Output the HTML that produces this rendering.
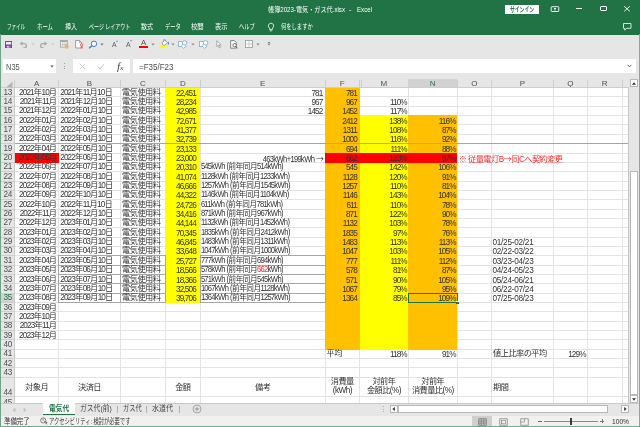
<!DOCTYPE html>
<html lang="ja">
<head>
<meta charset="utf-8">
<title>帳簿2023-電気・ガス代.xlsx - Excel</title>
<style>
html,body{margin:0;padding:0;}
body{width:640px;height:427px;overflow:hidden;position:relative;background:#fff;
 font-family:"Liberation Sans","Noto Sans CJK JP",sans-serif;}
#app{will-change:transform;position:absolute;left:0;top:0;width:640px;height:427px;overflow:hidden;background:#e6e6e6;}
#app div,#app svg{position:absolute;}
#app div{transform-origin:0 50%;}
.c{font-family:"Liberation Sans","Noto Sans CJK JP",sans-serif;font-size:8.2px;color:#333;white-space:nowrap;overflow:hidden;box-sizing:border-box;padding:0 1.5px;letter-spacing:-0.54px}
.n,.c.n{letter-spacing:-0.86px}
.tl{text-align:left}.tr{text-align:right}.tc{text-align:center}
.red,.c.red{color:#ff2a2a}
.h44{display:flex;align-items:center;line-height:8.6px}
.h44.tc{justify-content:center}.h44.tl{justify-content:flex-start}
.h44 span{display:block}
.hd{font-size:8px;color:#505050;text-align:center}
.rn{font-size:8.2px;color:#505050;text-align:center;letter-spacing:-0.3px}
.ui{font-family:"Liberation Sans","Noto Sans CJK JP",sans-serif;white-space:nowrap;line-height:1.3}
.w7{color:#fff;font-size:7px}
.g7{color:#444;font-size:7px}
.g8{color:#444;font-size:8px}
.ar{font-family:"Noto Sans CJK JP",sans-serif}
</style>
</head>
<body>
<div id="app">
<div style="left:0.00px;top:0.00px;width:640.00px;height:34.50px;background:#217346"></div>
<div class="ui w7" style="left:267.50px;top:5.05px;transform:scaleX(0.876);">帳簿2023-電気・ガス代.xlsx</div>
<div class="ui w7" style="left:349.00px;top:5.05px;transform:scaleX(1.067);">-</div>
<div class="ui w7" style="left:356.60px;top:5.05px;transform:scaleX(0.882);">Excel</div>
<div style="left:505.20px;top:5.20px;width:33.50px;height:8.80px;background:#fff"></div>
<div class="ui" style="left:510.00px;top:5.05px;transform:scaleX(0.686);color:#217346;font-size:7px;font-weight:bold">サインイン</div>
<svg style="left:549.50px;top:5.00px" width="10" height="8" viewBox="0 0 10 8"><rect x="1.2" y="1.7" width="7.6" height="4.8" rx="0.6" fill="none" stroke="#fff" stroke-width="0.9"/><path d="M5 5.6V3.1M3.9 4.1L5 3L6.1 4.1" fill="none" stroke="#fff" stroke-width="0.8"/></svg>
<div style="left:575.50px;top:8.00px;width:6.50px;height:1.00px;background:#fff"></div>
<div style="left:600.00px;top:6.30px;width:6.50px;height:5.00px;border:1px solid #fff;box-sizing:border-box;border-radius:1px"></div>
<svg style="left:623.00px;top:5.00px" width="8" height="8" viewBox="0 0 8 8"><path d="M1.2 1.3L6.8 6.3M6.8 1.3L1.2 6.3" stroke="#fff" stroke-width="0.9" fill="none"/></svg>
<svg style="left:622.00px;top:22.00px" width="11" height="10" viewBox="0 0 11 10"><path d="M1.5 1.5H9V6.3H4.6L2.8 8.2V6.3H1.5Z" fill="none" stroke="#fff" stroke-width="0.8"/></svg>
<div class="ui w7" style="left:6.60px;top:21.75px;transform:scaleX(0.646);">ファイル</div>
<div class="ui w7" style="left:37.20px;top:21.75px;transform:scaleX(0.769);">ホーム</div>
<div class="ui w7" style="left:65.00px;top:21.75px;transform:scaleX(0.857);">挿入</div>
<div class="ui w7" style="left:88.60px;top:21.75px;transform:scaleX(0.713);">ページ レイアウト</div>
<div class="ui w7" style="left:141.40px;top:21.75px;transform:scaleX(0.871);">数式</div>
<div class="ui w7" style="left:165.00px;top:21.75px;transform:scaleX(0.752);">データ</div>
<div class="ui w7" style="left:191.30px;top:21.75px;transform:scaleX(0.907);">校閲</div>
<div class="ui w7" style="left:215.30px;top:21.75px;transform:scaleX(0.893);">表示</div>
<div class="ui w7" style="left:239.40px;top:21.75px;transform:scaleX(0.752);">ヘルプ</div>
<div class="ui w7" style="left:281.30px;top:21.75px;transform:scaleX(0.755);">何をしますか</div>
<svg style="left:266.00px;top:21.50px" width="10" height="10" viewBox="0 0 10 10"><path d="M5 1.2A2.7 2.7 0 0 0 3.5 6.1V7.4H6.5V6.1A2.7 2.7 0 0 0 5 1.2Z" fill="none" stroke="#fff" stroke-width="0.8"/><path d="M3.8 8.8H6.2" stroke="#fff" stroke-width="0.8"/></svg>
<div style="left:1.00px;top:34.50px;width:638.00px;height:20.30px;background:#e6e6e6"></div>
<svg style="left:4.90px;top:40.50px" width="7.2" height="7.2" viewBox="0 0 7.2 7.2"><rect x="0" y="0" width="7.2" height="7.2" rx="0.4" fill="#7d40a2"/><rect x="1" y="1" width="5.2" height="2.5" fill="#f3ecf7"/><rect x="1.9" y="4.9" width="3.4" height="1.7" fill="#e3d3ec"/><rect x="3.9" y="5.2" width="1" height="1.4" fill="#7d40a2"/></svg>
<svg style="left:19.30px;top:40.60px" width="9" height="7.5" viewBox="0 0 9 7.5"><path d="M3.6 0.4L0.5 2.6L3.6 4.8Z" fill="#aaa"/><path d="M2.5 2.6H5.3A2.1 2.1 0 0 1 5.3 6.8H4.2" fill="none" stroke="#aaa" stroke-width="1.3"/></svg>
<svg style="left:30.50px;top:43.30px" width="4" height="3" viewBox="0 0 4 3"><path d="M0.3 0.4H3.7L2 2.5Z" fill="#c8c8c8"/></svg>
<svg style="left:39.30px;top:40.60px" width="9" height="7.5" viewBox="0 0 9 7.5"><path d="M5.4 0.4L8.5 2.6L5.4 4.8Z" fill="#aaa"/><path d="M6.5 2.6H3.7A2.1 2.1 0 0 0 3.7 6.8H4.8" fill="none" stroke="#aaa" stroke-width="1.3"/></svg>
<svg style="left:51.00px;top:43.30px" width="4" height="3" viewBox="0 0 4 3"><path d="M0.3 0.4H3.7L2 2.5Z" fill="#c8c8c8"/></svg>
<svg style="left:59.70px;top:40.00px" width="9" height="9" viewBox="0 0 9 9"><rect x="0.5" y="0.5" width="6.8" height="6.6" fill="#fff" stroke="#a0a0a0" stroke-width="0.8"/><rect x="0.5" y="0.5" width="6.8" height="1.6" fill="#a8a8a8"/><path d="M0.5 4.6H7.3M2.8 0.5V7.1M5 0.5V7.1" stroke="#b0b0b0" stroke-width="0.7"/><rect x="5" y="5" width="3.4" height="3.4" rx="0.5" fill="#f2b04c"/><path d="M5.8 5V4.3A0.9 0.9 0 0 1 7.6 4.3V5" fill="none" stroke="#f2b04c" stroke-width="0.7"/></svg>
<svg style="left:75.00px;top:40.00px" width="9" height="9" viewBox="0 0 9 9"><path d="M0.6 0.5H4.6L6.6 2.5V8H0.6Z" fill="#fff" stroke="#8c8c8c" stroke-width="0.8"/><path d="M4.4 0.5V2.7H6.6" fill="none" stroke="#8c8c8c" stroke-width="0.7"/><circle cx="6.6" cy="4.9" r="1.2" fill="#f7d2cc" stroke="#e05a44" stroke-width="0.8"/><path d="M5.6 8.4L6.6 6L7.7 8.4" fill="none" stroke="#e05a44" stroke-width="0.9"/></svg>
<svg style="left:88.00px;top:39.50px" width="10" height="9.5" viewBox="0 0 10 9.5"><circle cx="6" cy="3.8" r="2.7" fill="#fff" stroke="#3a78c8" stroke-width="0.95"/><path d="M4 5.8L1 8.3" stroke="#3a78c8" stroke-width="1.2"/></svg>
<svg style="left:100.40px;top:43.30px" width="4" height="3" viewBox="0 0 4 3"><path d="M0.3 0.4H3.7L2 2.5Z" fill="#7a7a7a"/></svg>
<div class="ui" style="left:111.80px;top:39.95px;transform:scaleX(0.963);color:#5a5a5a;font-size:7px">A</div>
<svg style="left:115.60px;top:39.90px" width="2" height="2" viewBox="0 0 2 2"><path d="M0.1 1.7L1 0.2L1.9 1.7Z" fill="#3a78c8"/></svg>
<div class="ui" style="left:126.20px;top:40.15px;transform:scaleX(0.985);color:#5a5a5a;font-size:7px">A</div>
<svg style="left:129.80px;top:40.10px" width="2" height="2" viewBox="0 0 2 2"><path d="M0.1 0.3L1 1.8L1.9 0.3Z" fill="#3a78c8"/></svg>
<div class="ui" style="left:141.10px;top:38.19px;transform:scaleX(1.053);color:#505050;font-size:7.4px">A</div>
<div style="left:139.10px;top:46.40px;width:8.80px;height:2.10px;background:#ff0000"></div>
<svg style="left:150.70px;top:43.30px" width="4" height="3" viewBox="0 0 4 3"><path d="M0.3 0.4H3.7L2 2.5Z" fill="#8a8a8a"/></svg>
<svg style="left:160.50px;top:39.30px" width="8.5" height="7.5" viewBox="0 0 8.5 7.5"><path d="M1.2 3.6L3.8 1.2L6.6 3.8L3.8 6.2Q2.4 6.6 1.4 5.4Z" fill="#fff" stroke="#8a8a8a" stroke-width="0.8"/><path d="M2.6 2.4V1.2A0.9 0.9 0 0 1 4.4 1.2V1.8" fill="none" stroke="#8a8a8a" stroke-width="0.6"/><path d="M7.3 2.6Q8.5 4.8 7.3 5.8Q6.3 4.8 7.3 2.6Z" fill="#3a6fc0"/></svg>
<div style="left:159.60px;top:46.40px;width:8.60px;height:2.10px;background:#ffff00"></div>
<svg style="left:171.30px;top:43.30px" width="4" height="3" viewBox="0 0 4 3"><path d="M0.3 0.4H3.7L2 2.5Z" fill="#8f8f8f"/></svg>
<svg style="left:178.00px;top:39.60px" width="9.5" height="9" viewBox="0 0 9.5 9"><rect x="0.5" y="1.6" width="4.8" height="4.8" fill="#fff" stroke="#7ba7d8" stroke-width="0.8"/><circle cx="6.6" cy="2.9" r="2.3" fill="#fff" stroke="#7ba7d8" stroke-width="0.8"/><path d="M5.6 4.1L7.8 6.3L5.6 8.5L3.4 6.3Z" fill="#fff" stroke="#7ba7d8" stroke-width="0.8"/></svg>
<svg style="left:190.50px;top:43.30px" width="4" height="3" viewBox="0 0 4 3"><path d="M0.3 0.4H3.7L2 2.5Z" fill="#8f8f8f"/></svg>
<svg style="left:199.00px;top:39.60px" width="9.5" height="9" viewBox="0 0 9.5 9"><rect x="0.5" y="1.6" width="4.8" height="4.8" fill="#fff" stroke="#7ba7d8" stroke-width="0.8"/><circle cx="6.6" cy="2.9" r="2.3" fill="#fff" stroke="#7ba7d8" stroke-width="0.8"/><path d="M5.6 4.1L7.8 6.3L5.6 8.5L3.4 6.3Z" fill="#fff" stroke="#7ba7d8" stroke-width="0.8"/></svg>
<svg style="left:216.20px;top:40.00px" width="6" height="9" viewBox="0 0 6 9"><path d="M0.8 0.7V6.6L2.3 5.2L3.4 7.9L4.4 7.5L3.3 4.9H5.2Z" fill="#fff" stroke="#8a8a8a" stroke-width="0.7"/></svg>
<svg style="left:229.80px;top:39.80px" width="8.5" height="9" viewBox="0 0 8.5 9"><path d="M0.7 0.6H4.4L6.2 2.4V8.2H0.7Z" fill="#fff" stroke="#6a6a6a" stroke-width="0.8"/><circle cx="4.6" cy="5.2" r="1.7" fill="#fff" stroke="#555" stroke-width="0.8"/><path d="M5.8 6.5L7.6 8.4" stroke="#555" stroke-width="0.9"/></svg>
<svg style="left:244.80px;top:40.00px" width="8" height="8" viewBox="0 0 8 8"><rect x="0.5" y="0.5" width="7" height="7" fill="#fff" stroke="#9a9a9a" stroke-width="0.8"/><path d="M4 0.5V7.5M0.5 4H7.5" stroke="#b8b8b8" stroke-width="0.7"/></svg>
<svg style="left:256.00px;top:43.30px" width="4" height="3" viewBox="0 0 4 3"><path d="M0.3 0.4H3.7L2 2.5Z" fill="#8a8a8a"/></svg>
<div style="left:267.70px;top:41.90px;width:2.20px;height:0.60px;background:#888"></div>
<svg style="left:266.80px;top:43.00px" width="4" height="3" viewBox="0 0 4 3"><path d="M0.3 0.4H3.7L2 2.5Z" fill="#888"/></svg>
<div style="left:1.00px;top:54.80px;width:638.00px;height:24.50px;background:#e6e6e6"></div>
<div style="left:3.30px;top:58.80px;width:53.00px;height:14.50px;background:#fff"></div>
<div class="ui g8" style="left:6.30px;top:61.84px;transform:scaleX(0.891);font-size:8.4px;color:#555">N35</div>
<svg style="left:49.50px;top:65.30px" width="4" height="3" viewBox="0 0 4 3"><path d="M0.3 0.4H3.7L2 2.5Z" fill="#555"/></svg>
<div style="left:64.20px;top:63.20px;width:1.00px;height:1.00px;background:#a0a0a0"></div>
<div style="left:64.20px;top:65.70px;width:1.00px;height:1.00px;background:#a0a0a0"></div>
<div style="left:64.20px;top:68.20px;width:1.00px;height:1.00px;background:#a0a0a0"></div>
<div style="left:72.50px;top:58.80px;width:57.50px;height:14.50px;background:#fff"></div>
<svg style="left:78.50px;top:62.50px" width="7" height="7" viewBox="0 0 7 7"><path d="M0.8 0.8L6.2 6.2M6.2 0.8L0.8 6.2" stroke="#b9b9b9" stroke-width="0.8" fill="none"/></svg>
<svg style="left:97.00px;top:62.60px" width="8" height="7" viewBox="0 0 8 7"><path d="M0.8 3.8L2.9 6L7.2 0.9" stroke="#b9b9b9" stroke-width="0.8" fill="none"/></svg>
<div class="ui" style="left:117.30px;top:59.65px;transform:scaleX(1.103);font-family:'Liberation Serif',serif;font-style:italic;font-size:10px;color:#444">f<span style="font-size:7px">x</span></div>
<div style="left:132.50px;top:58.80px;width:503.70px;height:14.30px;background:#fff"></div>
<div class="ui g8" style="left:139.00px;top:61.64px;transform:scaleX(0.953);font-size:8.4px;color:#505050">=F35/F23</div>
<svg style="left:627.00px;top:64.20px" width="5" height="4" viewBox="0 0 5 4"><path d="M0.6 0.8L2.5 2.8L4.4 0.8" stroke="#444" stroke-width="0.8" fill="none"/></svg>
<div style="left:14.50px;top:87.60px;width:614.10px;height:315.60px;background:#fff"></div>
<div style="left:14.50px;top:96.44px;width:614.10px;height:1.00px;background:#e3e3e3"></div>
<div style="left:14.50px;top:105.79px;width:614.10px;height:1.00px;background:#e3e3e3"></div>
<div style="left:14.50px;top:115.13px;width:614.10px;height:1.00px;background:#e3e3e3"></div>
<div style="left:14.50px;top:124.48px;width:614.10px;height:1.00px;background:#e3e3e3"></div>
<div style="left:14.50px;top:133.82px;width:614.10px;height:1.00px;background:#e3e3e3"></div>
<div style="left:14.50px;top:143.17px;width:614.10px;height:1.00px;background:#e3e3e3"></div>
<div style="left:14.50px;top:152.51px;width:614.10px;height:1.00px;background:#e3e3e3"></div>
<div style="left:14.50px;top:161.86px;width:614.10px;height:1.00px;background:#e3e3e3"></div>
<div style="left:14.50px;top:171.20px;width:614.10px;height:1.00px;background:#e3e3e3"></div>
<div style="left:14.50px;top:180.55px;width:614.10px;height:1.00px;background:#e3e3e3"></div>
<div style="left:14.50px;top:189.89px;width:614.10px;height:1.00px;background:#e3e3e3"></div>
<div style="left:14.50px;top:199.24px;width:614.10px;height:1.00px;background:#e3e3e3"></div>
<div style="left:14.50px;top:208.59px;width:614.10px;height:1.00px;background:#e3e3e3"></div>
<div style="left:14.50px;top:217.93px;width:614.10px;height:1.00px;background:#e3e3e3"></div>
<div style="left:14.50px;top:227.28px;width:614.10px;height:1.00px;background:#e3e3e3"></div>
<div style="left:14.50px;top:236.62px;width:614.10px;height:1.00px;background:#e3e3e3"></div>
<div style="left:14.50px;top:245.97px;width:614.10px;height:1.00px;background:#e3e3e3"></div>
<div style="left:14.50px;top:255.31px;width:614.10px;height:1.00px;background:#e3e3e3"></div>
<div style="left:14.50px;top:264.65px;width:614.10px;height:1.00px;background:#e3e3e3"></div>
<div style="left:14.50px;top:274.00px;width:614.10px;height:1.00px;background:#e3e3e3"></div>
<div style="left:14.50px;top:283.35px;width:614.10px;height:1.00px;background:#e3e3e3"></div>
<div style="left:14.50px;top:292.69px;width:614.10px;height:1.00px;background:#e3e3e3"></div>
<div style="left:14.50px;top:302.03px;width:614.10px;height:1.00px;background:#e3e3e3"></div>
<div style="left:14.50px;top:311.38px;width:614.10px;height:1.00px;background:#e3e3e3"></div>
<div style="left:14.50px;top:320.73px;width:614.10px;height:1.00px;background:#e3e3e3"></div>
<div style="left:14.50px;top:330.07px;width:614.10px;height:1.00px;background:#e3e3e3"></div>
<div style="left:14.50px;top:339.42px;width:614.10px;height:1.00px;background:#e3e3e3"></div>
<div style="left:14.50px;top:348.76px;width:614.10px;height:1.00px;background:#e3e3e3"></div>
<div style="left:14.50px;top:358.11px;width:614.10px;height:1.00px;background:#e3e3e3"></div>
<div style="left:14.50px;top:367.45px;width:614.10px;height:1.00px;background:#e3e3e3"></div>
<div style="left:14.50px;top:376.79px;width:614.10px;height:1.00px;background:#e3e3e3"></div>
<div style="left:14.50px;top:396.10px;width:614.10px;height:1.00px;background:#e3e3e3"></div>
<div style="left:58.20px;top:87.60px;width:1.00px;height:315.60px;background:#e3e3e3"></div>
<div style="left:119.80px;top:87.60px;width:1.00px;height:315.60px;background:#e3e3e3"></div>
<div style="left:164.80px;top:87.60px;width:1.00px;height:315.60px;background:#e3e3e3"></div>
<div style="left:199.80px;top:87.60px;width:1.00px;height:315.60px;background:#e3e3e3"></div>
<div style="left:324.50px;top:87.60px;width:1.00px;height:315.60px;background:#e3e3e3"></div>
<div style="left:359.10px;top:87.60px;width:1.00px;height:315.60px;background:#e3e3e3"></div>
<div style="left:407.80px;top:87.60px;width:1.00px;height:315.60px;background:#e3e3e3"></div>
<div style="left:456.70px;top:87.60px;width:1.00px;height:315.60px;background:#e3e3e3"></div>
<div style="left:491.10px;top:87.60px;width:1.00px;height:315.60px;background:#e3e3e3"></div>
<div style="left:552.90px;top:87.60px;width:1.00px;height:315.60px;background:#e3e3e3"></div>
<div style="left:586.70px;top:87.60px;width:1.00px;height:315.60px;background:#e3e3e3"></div>
<div style="left:621.80px;top:87.60px;width:1.00px;height:315.60px;background:#e3e3e3"></div>
<div style="left:458.20px;top:153.51px;width:103.20px;height:8.35px;background:#fff"></div>
<div style="left:165.70px;top:87.10px;width:34.70px;height:215.83px;background:#ffff00"></div>
<div style="left:325.40px;top:87.10px;width:34.30px;height:262.46px;background:#ffc000"></div>
<div style="left:359.60px;top:115.13px;width:48.70px;height:234.43px;background:#ffff00"></div>
<div style="left:408.20px;top:115.13px;width:49.30px;height:234.43px;background:#ffc000"></div>
<div style="left:15.00px;top:152.51px;width:44.20px;height:10.35px;background:#ff0000"></div>
<div style="left:325.40px;top:152.51px;width:132.10px;height:10.35px;background:#ff0000"></div>
<div style="left:14.50px;top:143.17px;width:624.50px;height:1.00px;background:#ff8080"></div>
<div style="left:58.30px;top:255.41px;width:267.10px;height:0.80px;background:#a6a6a6"></div>
<div style="left:58.30px;top:264.75px;width:267.10px;height:0.80px;background:#a6a6a6"></div>
<div style="left:58.30px;top:274.10px;width:267.10px;height:0.80px;background:#a6a6a6"></div>
<div style="left:58.30px;top:283.45px;width:267.10px;height:0.80px;background:#a6a6a6"></div>
<div style="left:58.30px;top:292.79px;width:267.10px;height:0.80px;background:#a6a6a6"></div>
<div style="left:58.30px;top:302.13px;width:267.10px;height:0.80px;background:#a6a6a6"></div>
<div style="left:58.30px;top:255.41px;width:0.80px;height:47.52px;background:#a6a6a6"></div>
<div style="left:119.90px;top:255.41px;width:0.80px;height:47.52px;background:#a6a6a6"></div>
<div style="left:164.90px;top:255.41px;width:0.80px;height:47.52px;background:#a6a6a6"></div>
<div style="left:199.90px;top:255.41px;width:0.80px;height:47.52px;background:#a6a6a6"></div>
<div style="left:324.60px;top:255.41px;width:0.80px;height:47.52px;background:#a6a6a6"></div>
<div style="left:165.80px;top:255.31px;width:34.20px;height:47.72px;background:#ffff00"></div>
<div class="c tr" style="left:14.50px;top:87.60px;width:44.20px;height:9.34px;line-height:10.54px;padding-right:2.2px"><span class="n">2021</span>年<span class="n">10</span>月</div>
<div class="c tl" style="left:58.70px;top:87.60px;width:61.60px;height:9.34px;line-height:10.54px;"><span class="n">2021</span>年<span class="n">11</span>月<span class="n">10</span>日</div>
<div class="c tl" style="left:120.30px;top:87.60px;width:45.00px;height:9.34px;line-height:10.54px;padding-left:1.8px">電気使用料</div>
<div class="c tr  n" style="left:165.30px;top:87.60px;width:35.00px;height:9.34px;line-height:12.94px;padding-right:4.4px">22,451</div>
<div class="c tr  n" style="left:200.30px;top:87.60px;width:124.70px;height:9.34px;line-height:12.94px;overflow:visible;padding-right:2.5px;padding-left:1px">781</div>
<div class="c tr  n" style="left:325.00px;top:87.60px;width:34.60px;height:9.34px;line-height:12.94px;padding-right:2.6px">781</div>
<div class="c tr" style="left:14.50px;top:96.94px;width:44.20px;height:9.34px;line-height:10.54px;padding-right:2.2px"><span class="n">2021</span>年<span class="n">11</span>月</div>
<div class="c tl" style="left:58.70px;top:96.94px;width:61.60px;height:9.34px;line-height:10.54px;"><span class="n">2021</span>年<span class="n">12</span>月<span class="n">10</span>日</div>
<div class="c tl" style="left:120.30px;top:96.94px;width:45.00px;height:9.34px;line-height:10.54px;padding-left:1.8px">電気使用料</div>
<div class="c tr  n" style="left:165.30px;top:96.94px;width:35.00px;height:9.34px;line-height:12.94px;padding-right:4.4px">28,234</div>
<div class="c tr  n" style="left:200.30px;top:96.94px;width:124.70px;height:9.34px;line-height:12.94px;overflow:visible;padding-right:2.5px;padding-left:1px">967</div>
<div class="c tr  n" style="left:325.00px;top:96.94px;width:34.60px;height:9.34px;line-height:12.94px;padding-right:2.6px">967</div>
<div class="c tr  n" style="left:359.60px;top:96.94px;width:48.70px;height:9.34px;line-height:12.94px;">110%</div>
<div class="c tr" style="left:14.50px;top:106.29px;width:44.20px;height:9.34px;line-height:10.54px;padding-right:2.2px"><span class="n">2021</span>年<span class="n">12</span>月</div>
<div class="c tl" style="left:58.70px;top:106.29px;width:61.60px;height:9.34px;line-height:10.54px;"><span class="n">2022</span>年<span class="n">01</span>月<span class="n">10</span>日</div>
<div class="c tl" style="left:120.30px;top:106.29px;width:45.00px;height:9.34px;line-height:10.54px;padding-left:1.8px">電気使用料</div>
<div class="c tr  n" style="left:165.30px;top:106.29px;width:35.00px;height:9.34px;line-height:12.94px;padding-right:4.4px">42,985</div>
<div class="c tr  n" style="left:200.30px;top:106.29px;width:124.70px;height:9.34px;line-height:12.94px;overflow:visible;padding-right:2.5px;padding-left:1px">1452</div>
<div class="c tr  n" style="left:325.00px;top:106.29px;width:34.60px;height:9.34px;line-height:12.94px;padding-right:2.6px">1452</div>
<div class="c tr  n" style="left:359.60px;top:106.29px;width:48.70px;height:9.34px;line-height:12.94px;">117%</div>
<div class="c tr" style="left:14.50px;top:115.63px;width:44.20px;height:9.34px;line-height:10.54px;padding-right:2.2px"><span class="n">2022</span>年<span class="n">01</span>月</div>
<div class="c tl" style="left:58.70px;top:115.63px;width:61.60px;height:9.34px;line-height:10.54px;"><span class="n">2022</span>年<span class="n">02</span>月<span class="n">10</span>日</div>
<div class="c tl" style="left:120.30px;top:115.63px;width:45.00px;height:9.34px;line-height:10.54px;padding-left:1.8px">電気使用料</div>
<div class="c tr  n" style="left:165.30px;top:115.63px;width:35.00px;height:9.34px;line-height:12.94px;padding-right:4.4px">72,671</div>
<div class="c tr  n" style="left:325.00px;top:115.63px;width:34.60px;height:9.34px;line-height:12.94px;padding-right:2.6px">2412</div>
<div class="c tr  n" style="left:359.60px;top:115.63px;width:48.70px;height:9.34px;line-height:12.94px;">138%</div>
<div class="c tr  n" style="left:408.30px;top:115.63px;width:48.90px;height:9.34px;line-height:12.94px;">116%</div>
<div class="c tr" style="left:14.50px;top:124.98px;width:44.20px;height:9.34px;line-height:10.54px;padding-right:2.2px"><span class="n">2022</span>年<span class="n">02</span>月</div>
<div class="c tl" style="left:58.70px;top:124.98px;width:61.60px;height:9.34px;line-height:10.54px;"><span class="n">2022</span>年<span class="n">03</span>月<span class="n">10</span>日</div>
<div class="c tl" style="left:120.30px;top:124.98px;width:45.00px;height:9.34px;line-height:10.54px;padding-left:1.8px">電気使用料</div>
<div class="c tr  n" style="left:165.30px;top:124.98px;width:35.00px;height:9.34px;line-height:12.94px;padding-right:4.4px">41,377</div>
<div class="c tr  n" style="left:325.00px;top:124.98px;width:34.60px;height:9.34px;line-height:12.94px;padding-right:2.6px">1311</div>
<div class="c tr  n" style="left:359.60px;top:124.98px;width:48.70px;height:9.34px;line-height:12.94px;">108%</div>
<div class="c tr  n" style="left:408.30px;top:124.98px;width:48.90px;height:9.34px;line-height:12.94px;">87%</div>
<div class="c tr" style="left:14.50px;top:134.32px;width:44.20px;height:9.35px;line-height:10.55px;padding-right:2.2px"><span class="n">2022</span>年<span class="n">03</span>月</div>
<div class="c tl" style="left:58.70px;top:134.32px;width:61.60px;height:9.35px;line-height:10.55px;"><span class="n">2022</span>年<span class="n">04</span>月<span class="n">10</span>日</div>
<div class="c tl" style="left:120.30px;top:134.32px;width:45.00px;height:9.35px;line-height:10.55px;padding-left:1.8px">電気使用料</div>
<div class="c tr  n" style="left:165.30px;top:134.32px;width:35.00px;height:9.35px;line-height:12.95px;padding-right:4.4px">32,739</div>
<div class="c tr  n" style="left:325.00px;top:134.32px;width:34.60px;height:9.35px;line-height:12.95px;padding-right:2.6px">1000</div>
<div class="c tr  n" style="left:359.60px;top:134.32px;width:48.70px;height:9.35px;line-height:12.95px;">116%</div>
<div class="c tr  n" style="left:408.30px;top:134.32px;width:48.90px;height:9.35px;line-height:12.95px;">92%</div>
<div class="c tr" style="left:14.50px;top:143.67px;width:44.20px;height:9.34px;line-height:10.54px;padding-right:2.2px"><span class="n">2022</span>年<span class="n">04</span>月</div>
<div class="c tl" style="left:58.70px;top:143.67px;width:61.60px;height:9.34px;line-height:10.54px;"><span class="n">2022</span>年<span class="n">05</span>月<span class="n">10</span>日</div>
<div class="c tl" style="left:120.30px;top:143.67px;width:45.00px;height:9.34px;line-height:10.54px;padding-left:1.8px">電気使用料</div>
<div class="c tr  n" style="left:165.30px;top:143.67px;width:35.00px;height:9.34px;line-height:12.94px;padding-right:4.4px">23,133</div>
<div class="c tr  n" style="left:325.00px;top:143.67px;width:34.60px;height:9.34px;line-height:12.94px;padding-right:2.6px">694</div>
<div class="c tr  n" style="left:359.60px;top:143.67px;width:48.70px;height:9.34px;line-height:12.94px;">111%</div>
<div class="c tr  n" style="left:408.30px;top:143.67px;width:48.90px;height:9.34px;line-height:12.94px;">88%</div>
<div class="c tr" style="left:14.50px;top:153.01px;width:44.20px;height:9.35px;line-height:10.55px;padding-right:2.2px"><span class="n">2022</span>年<span class="n">05</span>月</div>
<div class="c tl" style="left:58.70px;top:153.01px;width:61.60px;height:9.35px;line-height:10.55px;"><span class="n">2022</span>年<span class="n">06</span>月<span class="n">10</span>日</div>
<div class="c tl" style="left:120.30px;top:153.01px;width:45.00px;height:9.35px;line-height:10.55px;padding-left:1.8px">電気使用料</div>
<div class="c tr  n" style="left:165.30px;top:153.01px;width:35.00px;height:9.35px;line-height:12.95px;padding-right:4.4px">23,000</div>
<div class="c tr" style="left:200.30px;top:153.01px;width:124.70px;height:9.35px;line-height:10.55px;overflow:visible;padding-right:2.5px;padding-left:1px;transform-origin:100% 50%;transform:scaleX(0.93);padding-right:1.5px"><span class="n">463</span>kWh<span class="n">+199</span>kWh <span class="ar">→</span></div>
<div class="c tr  n" style="left:325.00px;top:153.01px;width:34.60px;height:9.35px;line-height:12.95px;padding-right:2.6px">662</div>
<div class="c tr  n" style="left:359.60px;top:153.01px;width:48.70px;height:9.35px;line-height:12.95px;">123%</div>
<div class="c tr  n" style="left:408.30px;top:153.01px;width:48.90px;height:9.35px;line-height:12.95px;">97%</div>
<div class="c tl red" style="left:457.20px;top:153.01px;width:34.40px;height:9.35px;line-height:10.55px;overflow:visible;width:200px">※ 従量電灯B<span class="ar">→</span>同Cへ契約変更</div>
<div class="c tr" style="left:14.50px;top:162.36px;width:44.20px;height:9.34px;line-height:10.54px;padding-right:2.2px"><span class="n">2022</span>年<span class="n">06</span>月</div>
<div class="c tl" style="left:58.70px;top:162.36px;width:61.60px;height:9.34px;line-height:10.54px;"><span class="n">2022</span>年<span class="n">07</span>月<span class="n">10</span>日</div>
<div class="c tl" style="left:120.30px;top:162.36px;width:45.00px;height:9.34px;line-height:10.54px;padding-left:1.8px">電気使用料</div>
<div class="c tr  n" style="left:165.30px;top:162.36px;width:35.00px;height:9.34px;line-height:12.94px;padding-right:4.4px">20,310</div>
<div class="c tl" style="left:200.30px;top:162.36px;width:124.70px;height:9.34px;line-height:10.54px;overflow:visible;padding-right:2.5px;padding-left:1px;transform:scaleX(0.93)"><span class="n">545</span>kWh (前年同月<span class="n">514</span>kWh)</div>
<div class="c tr  n" style="left:325.00px;top:162.36px;width:34.60px;height:9.34px;line-height:12.94px;padding-right:2.6px">545</div>
<div class="c tr  n" style="left:359.60px;top:162.36px;width:48.70px;height:9.34px;line-height:12.94px;">142%</div>
<div class="c tr  n" style="left:408.30px;top:162.36px;width:48.90px;height:9.34px;line-height:12.94px;">106%</div>
<div class="c tr" style="left:14.50px;top:171.70px;width:44.20px;height:9.35px;line-height:10.55px;padding-right:2.2px"><span class="n">2022</span>年<span class="n">07</span>月</div>
<div class="c tl" style="left:58.70px;top:171.70px;width:61.60px;height:9.35px;line-height:10.55px;"><span class="n">2022</span>年<span class="n">08</span>月<span class="n">10</span>日</div>
<div class="c tl" style="left:120.30px;top:171.70px;width:45.00px;height:9.35px;line-height:10.55px;padding-left:1.8px">電気使用料</div>
<div class="c tr  n" style="left:165.30px;top:171.70px;width:35.00px;height:9.35px;line-height:12.95px;padding-right:4.4px">41,074</div>
<div class="c tl" style="left:200.30px;top:171.70px;width:124.70px;height:9.35px;line-height:10.55px;overflow:visible;padding-right:2.5px;padding-left:1px;transform:scaleX(0.93)"><span class="n">1128</span>kWh (前年同月<span class="n">1233</span>kWh)</div>
<div class="c tr  n" style="left:325.00px;top:171.70px;width:34.60px;height:9.35px;line-height:12.95px;padding-right:2.6px">1128</div>
<div class="c tr  n" style="left:359.60px;top:171.70px;width:48.70px;height:9.35px;line-height:12.95px;">120%</div>
<div class="c tr  n" style="left:408.30px;top:171.70px;width:48.90px;height:9.35px;line-height:12.95px;">91%</div>
<div class="c tr" style="left:14.50px;top:181.05px;width:44.20px;height:9.34px;line-height:10.54px;padding-right:2.2px"><span class="n">2022</span>年<span class="n">08</span>月</div>
<div class="c tl" style="left:58.70px;top:181.05px;width:61.60px;height:9.34px;line-height:10.54px;"><span class="n">2022</span>年<span class="n">09</span>月<span class="n">10</span>日</div>
<div class="c tl" style="left:120.30px;top:181.05px;width:45.00px;height:9.34px;line-height:10.54px;padding-left:1.8px">電気使用料</div>
<div class="c tr  n" style="left:165.30px;top:181.05px;width:35.00px;height:9.34px;line-height:12.94px;padding-right:4.4px">46,666</div>
<div class="c tl" style="left:200.30px;top:181.05px;width:124.70px;height:9.34px;line-height:10.54px;overflow:visible;padding-right:2.5px;padding-left:1px;transform:scaleX(0.93)"><span class="n">1257</span>kWh (前年同月<span class="n">1545</span>kWh)</div>
<div class="c tr  n" style="left:325.00px;top:181.05px;width:34.60px;height:9.34px;line-height:12.94px;padding-right:2.6px">1257</div>
<div class="c tr  n" style="left:359.60px;top:181.05px;width:48.70px;height:9.34px;line-height:12.94px;">110%</div>
<div class="c tr  n" style="left:408.30px;top:181.05px;width:48.90px;height:9.34px;line-height:12.94px;">81%</div>
<div class="c tr" style="left:14.50px;top:190.39px;width:44.20px;height:9.35px;line-height:10.55px;padding-right:2.2px"><span class="n">2022</span>年<span class="n">09</span>月</div>
<div class="c tl" style="left:58.70px;top:190.39px;width:61.60px;height:9.35px;line-height:10.55px;"><span class="n">2022</span>年<span class="n">10</span>月<span class="n">10</span>日</div>
<div class="c tl" style="left:120.30px;top:190.39px;width:45.00px;height:9.35px;line-height:10.55px;padding-left:1.8px">電気使用料</div>
<div class="c tr  n" style="left:165.30px;top:190.39px;width:35.00px;height:9.35px;line-height:12.95px;padding-right:4.4px">44,322</div>
<div class="c tl" style="left:200.30px;top:190.39px;width:124.70px;height:9.35px;line-height:10.55px;overflow:visible;padding-right:2.5px;padding-left:1px;transform:scaleX(0.93)"><span class="n">1146</span>kWh (前年同月<span class="n">1104</span>kWh)</div>
<div class="c tr  n" style="left:325.00px;top:190.39px;width:34.60px;height:9.35px;line-height:12.95px;padding-right:2.6px">1146</div>
<div class="c tr  n" style="left:359.60px;top:190.39px;width:48.70px;height:9.35px;line-height:12.95px;">143%</div>
<div class="c tr  n" style="left:408.30px;top:190.39px;width:48.90px;height:9.35px;line-height:12.95px;">104%</div>
<div class="c tr" style="left:14.50px;top:199.74px;width:44.20px;height:9.34px;line-height:10.54px;padding-right:2.2px"><span class="n">2022</span>年<span class="n">10</span>月</div>
<div class="c tl" style="left:58.70px;top:199.74px;width:61.60px;height:9.34px;line-height:10.54px;"><span class="n">2022</span>年<span class="n">11</span>月<span class="n">10</span>日</div>
<div class="c tl" style="left:120.30px;top:199.74px;width:45.00px;height:9.34px;line-height:10.54px;padding-left:1.8px">電気使用料</div>
<div class="c tr  n" style="left:165.30px;top:199.74px;width:35.00px;height:9.34px;line-height:12.94px;padding-right:4.4px">24,726</div>
<div class="c tl" style="left:200.30px;top:199.74px;width:124.70px;height:9.34px;line-height:10.54px;overflow:visible;padding-right:2.5px;padding-left:1px;transform:scaleX(0.93)"><span class="n">611</span>kWh (前年同月<span class="n">781</span>kWh)</div>
<div class="c tr  n" style="left:325.00px;top:199.74px;width:34.60px;height:9.34px;line-height:12.94px;padding-right:2.6px">611</div>
<div class="c tr  n" style="left:359.60px;top:199.74px;width:48.70px;height:9.34px;line-height:12.94px;">110%</div>
<div class="c tr  n" style="left:408.30px;top:199.74px;width:48.90px;height:9.34px;line-height:12.94px;">78%</div>
<div class="c tr" style="left:14.50px;top:209.09px;width:44.20px;height:9.34px;line-height:10.54px;padding-right:2.2px"><span class="n">2022</span>年<span class="n">11</span>月</div>
<div class="c tl" style="left:58.70px;top:209.09px;width:61.60px;height:9.34px;line-height:10.54px;"><span class="n">2022</span>年<span class="n">12</span>月<span class="n">10</span>日</div>
<div class="c tl" style="left:120.30px;top:209.09px;width:45.00px;height:9.34px;line-height:10.54px;padding-left:1.8px">電気使用料</div>
<div class="c tr  n" style="left:165.30px;top:209.09px;width:35.00px;height:9.34px;line-height:12.94px;padding-right:4.4px">34,416</div>
<div class="c tl" style="left:200.30px;top:209.09px;width:124.70px;height:9.34px;line-height:10.54px;overflow:visible;padding-right:2.5px;padding-left:1px;transform:scaleX(0.93)"><span class="n">871</span>kWh (前年同月<span class="n">967</span>kWh)</div>
<div class="c tr  n" style="left:325.00px;top:209.09px;width:34.60px;height:9.34px;line-height:12.94px;padding-right:2.6px">871</div>
<div class="c tr  n" style="left:359.60px;top:209.09px;width:48.70px;height:9.34px;line-height:12.94px;">122%</div>
<div class="c tr  n" style="left:408.30px;top:209.09px;width:48.90px;height:9.34px;line-height:12.94px;">90%</div>
<div class="c tr" style="left:14.50px;top:218.43px;width:44.20px;height:9.34px;line-height:10.54px;padding-right:2.2px"><span class="n">2022</span>年<span class="n">12</span>月</div>
<div class="c tl" style="left:58.70px;top:218.43px;width:61.60px;height:9.34px;line-height:10.54px;"><span class="n">2023</span>年<span class="n">01</span>月<span class="n">10</span>日</div>
<div class="c tl" style="left:120.30px;top:218.43px;width:45.00px;height:9.34px;line-height:10.54px;padding-left:1.8px">電気使用料</div>
<div class="c tr  n" style="left:165.30px;top:218.43px;width:35.00px;height:9.34px;line-height:12.94px;padding-right:4.4px">44,144</div>
<div class="c tl" style="left:200.30px;top:218.43px;width:124.70px;height:9.34px;line-height:10.54px;overflow:visible;padding-right:2.5px;padding-left:1px;transform:scaleX(0.93)"><span class="n">1132</span>kWh (前年同月<span class="n">1452</span>kWh)</div>
<div class="c tr  n" style="left:325.00px;top:218.43px;width:34.60px;height:9.34px;line-height:12.94px;padding-right:2.6px">1132</div>
<div class="c tr  n" style="left:359.60px;top:218.43px;width:48.70px;height:9.34px;line-height:12.94px;">103%</div>
<div class="c tr  n" style="left:408.30px;top:218.43px;width:48.90px;height:9.34px;line-height:12.94px;">78%</div>
<div class="c tr" style="left:14.50px;top:227.78px;width:44.20px;height:9.34px;line-height:10.54px;padding-right:2.2px"><span class="n">2023</span>年<span class="n">01</span>月</div>
<div class="c tl" style="left:58.70px;top:227.78px;width:61.60px;height:9.34px;line-height:10.54px;"><span class="n">2023</span>年<span class="n">02</span>月<span class="n">10</span>日</div>
<div class="c tl" style="left:120.30px;top:227.78px;width:45.00px;height:9.34px;line-height:10.54px;padding-left:1.8px">電気使用料</div>
<div class="c tr  n" style="left:165.30px;top:227.78px;width:35.00px;height:9.34px;line-height:12.94px;padding-right:4.4px">70,345</div>
<div class="c tl" style="left:200.30px;top:227.78px;width:124.70px;height:9.34px;line-height:10.54px;overflow:visible;padding-right:2.5px;padding-left:1px;transform:scaleX(0.93)"><span class="n">1835</span>kWh (前年同月<span class="n">2412</span>kWh)</div>
<div class="c tr  n" style="left:325.00px;top:227.78px;width:34.60px;height:9.34px;line-height:12.94px;padding-right:2.6px">1835</div>
<div class="c tr  n" style="left:359.60px;top:227.78px;width:48.70px;height:9.34px;line-height:12.94px;">97%</div>
<div class="c tr  n" style="left:408.30px;top:227.78px;width:48.90px;height:9.34px;line-height:12.94px;">76%</div>
<div class="c tr" style="left:14.50px;top:237.12px;width:44.20px;height:9.34px;line-height:10.54px;padding-right:2.2px"><span class="n">2023</span>年<span class="n">02</span>月</div>
<div class="c tl" style="left:58.70px;top:237.12px;width:61.60px;height:9.34px;line-height:10.54px;"><span class="n">2023</span>年<span class="n">03</span>月<span class="n">10</span>日</div>
<div class="c tl" style="left:120.30px;top:237.12px;width:45.00px;height:9.34px;line-height:10.54px;padding-left:1.8px">電気使用料</div>
<div class="c tr  n" style="left:165.30px;top:237.12px;width:35.00px;height:9.34px;line-height:12.94px;padding-right:4.4px">46,845</div>
<div class="c tl" style="left:200.30px;top:237.12px;width:124.70px;height:9.34px;line-height:10.54px;overflow:visible;padding-right:2.5px;padding-left:1px;transform:scaleX(0.93)"><span class="n">1483</span>kWh (前年同月<span class="n">1311</span>kWh)</div>
<div class="c tr  n" style="left:325.00px;top:237.12px;width:34.60px;height:9.34px;line-height:12.94px;padding-right:2.6px">1483</div>
<div class="c tr  n" style="left:359.60px;top:237.12px;width:48.70px;height:9.34px;line-height:12.94px;">113%</div>
<div class="c tr  n" style="left:408.30px;top:237.12px;width:48.90px;height:9.34px;line-height:12.94px;">113%</div>
<div class="c tl  n" style="left:491.60px;top:237.12px;width:61.80px;height:9.34px;line-height:12.94px;letter-spacing:-0.25px;padding-left:0.9px">01/25-02/21</div>
<div class="c tr" style="left:14.50px;top:246.47px;width:44.20px;height:9.34px;line-height:10.54px;padding-right:2.2px"><span class="n">2023</span>年<span class="n">03</span>月</div>
<div class="c tl" style="left:58.70px;top:246.47px;width:61.60px;height:9.34px;line-height:10.54px;"><span class="n">2023</span>年<span class="n">04</span>月<span class="n">10</span>日</div>
<div class="c tl" style="left:120.30px;top:246.47px;width:45.00px;height:9.34px;line-height:10.54px;padding-left:1.8px">電気使用料</div>
<div class="c tr  n" style="left:165.30px;top:246.47px;width:35.00px;height:9.34px;line-height:12.94px;padding-right:4.4px">33,648</div>
<div class="c tl" style="left:200.30px;top:246.47px;width:124.70px;height:9.34px;line-height:10.54px;overflow:visible;padding-right:2.5px;padding-left:1px;transform:scaleX(0.93)"><span class="n">1047</span>kWh (前年同月<span class="n">1000</span>kWh)</div>
<div class="c tr  n" style="left:325.00px;top:246.47px;width:34.60px;height:9.34px;line-height:12.94px;padding-right:2.6px">1047</div>
<div class="c tr  n" style="left:359.60px;top:246.47px;width:48.70px;height:9.34px;line-height:12.94px;">103%</div>
<div class="c tr  n" style="left:408.30px;top:246.47px;width:48.90px;height:9.34px;line-height:12.94px;">105%</div>
<div class="c tl  n" style="left:491.60px;top:246.47px;width:61.80px;height:9.34px;line-height:12.94px;letter-spacing:-0.25px;padding-left:0.9px">02/22-03/22</div>
<div class="c tr" style="left:14.50px;top:255.81px;width:44.20px;height:9.34px;line-height:10.54px;padding-right:2.2px"><span class="n">2023</span>年<span class="n">04</span>月</div>
<div class="c tl" style="left:58.70px;top:255.81px;width:61.60px;height:9.34px;line-height:10.54px;"><span class="n">2023</span>年<span class="n">05</span>月<span class="n">10</span>日</div>
<div class="c tl" style="left:120.30px;top:255.81px;width:45.00px;height:9.34px;line-height:10.54px;padding-left:1.8px">電気使用料</div>
<div class="c tr  n" style="left:165.30px;top:255.81px;width:35.00px;height:9.34px;line-height:12.94px;padding-right:4.4px">25,727</div>
<div class="c tl" style="left:200.30px;top:255.81px;width:124.70px;height:9.34px;line-height:10.54px;overflow:visible;padding-right:2.5px;padding-left:1px;transform:scaleX(0.93)"><span class="n">777</span>kWh (前年同月<span class="n">694</span>kWh)</div>
<div class="c tr  n" style="left:325.00px;top:255.81px;width:34.60px;height:9.34px;line-height:12.94px;padding-right:2.6px">777</div>
<div class="c tr  n" style="left:359.60px;top:255.81px;width:48.70px;height:9.34px;line-height:12.94px;">111%</div>
<div class="c tr  n" style="left:408.30px;top:255.81px;width:48.90px;height:9.34px;line-height:12.94px;">112%</div>
<div class="c tl  n" style="left:491.60px;top:255.81px;width:61.80px;height:9.34px;line-height:12.94px;letter-spacing:-0.25px;padding-left:0.9px">03/23-04/23</div>
<div class="c tr" style="left:14.50px;top:265.15px;width:44.20px;height:9.35px;line-height:10.55px;padding-right:2.2px"><span class="n">2023</span>年<span class="n">05</span>月</div>
<div class="c tl" style="left:58.70px;top:265.15px;width:61.60px;height:9.35px;line-height:10.55px;"><span class="n">2023</span>年<span class="n">06</span>月<span class="n">10</span>日</div>
<div class="c tl" style="left:120.30px;top:265.15px;width:45.00px;height:9.35px;line-height:10.55px;padding-left:1.8px">電気使用料</div>
<div class="c tr  n" style="left:165.30px;top:265.15px;width:35.00px;height:9.35px;line-height:12.95px;padding-right:4.4px">18,566</div>
<div class="c tl" style="left:200.30px;top:265.15px;width:124.70px;height:9.35px;line-height:10.55px;overflow:visible;padding-right:2.5px;padding-left:1px;transform:scaleX(0.93)"><span class="n">578</span>kWh (前年同月<span class="red"><span class="n">662</span></span>kWh)</div>
<div class="c tr  n" style="left:325.00px;top:265.15px;width:34.60px;height:9.35px;line-height:12.95px;padding-right:2.6px">578</div>
<div class="c tr  n" style="left:359.60px;top:265.15px;width:48.70px;height:9.35px;line-height:12.95px;">81%</div>
<div class="c tr  n" style="left:408.30px;top:265.15px;width:48.90px;height:9.35px;line-height:12.95px;">87%</div>
<div class="c tl  n" style="left:491.60px;top:265.15px;width:61.80px;height:9.35px;line-height:12.95px;letter-spacing:-0.25px;padding-left:0.9px">04/24-05/23</div>
<div class="c tr" style="left:14.50px;top:274.50px;width:44.20px;height:9.35px;line-height:10.55px;padding-right:2.2px"><span class="n">2023</span>年<span class="n">06</span>月</div>
<div class="c tl" style="left:58.70px;top:274.50px;width:61.60px;height:9.35px;line-height:10.55px;"><span class="n">2023</span>年<span class="n">07</span>月<span class="n">10</span>日</div>
<div class="c tl" style="left:120.30px;top:274.50px;width:45.00px;height:9.35px;line-height:10.55px;padding-left:1.8px">電気使用料</div>
<div class="c tr  n" style="left:165.30px;top:274.50px;width:35.00px;height:9.35px;line-height:12.95px;padding-right:4.4px">18,366</div>
<div class="c tl" style="left:200.30px;top:274.50px;width:124.70px;height:9.35px;line-height:10.55px;overflow:visible;padding-right:2.5px;padding-left:1px;transform:scaleX(0.93)"><span class="n">571</span>kWh (前年同月<span class="n">545</span>kWh)</div>
<div class="c tr  n" style="left:325.00px;top:274.50px;width:34.60px;height:9.35px;line-height:12.95px;padding-right:2.6px">571</div>
<div class="c tr  n" style="left:359.60px;top:274.50px;width:48.70px;height:9.35px;line-height:12.95px;">90%</div>
<div class="c tr  n" style="left:408.30px;top:274.50px;width:48.90px;height:9.35px;line-height:12.95px;">105%</div>
<div class="c tl  n" style="left:491.60px;top:274.50px;width:61.80px;height:9.35px;line-height:12.95px;letter-spacing:-0.25px;padding-left:0.9px">05/24-06/21</div>
<div class="c tr" style="left:14.50px;top:283.85px;width:44.20px;height:9.34px;line-height:10.54px;padding-right:2.2px"><span class="n">2023</span>年<span class="n">07</span>月</div>
<div class="c tl" style="left:58.70px;top:283.85px;width:61.60px;height:9.34px;line-height:10.54px;"><span class="n">2023</span>年<span class="n">08</span>月<span class="n">10</span>日</div>
<div class="c tl" style="left:120.30px;top:283.85px;width:45.00px;height:9.34px;line-height:10.54px;padding-left:1.8px">電気使用料</div>
<div class="c tr  n" style="left:165.30px;top:283.85px;width:35.00px;height:9.34px;line-height:12.94px;padding-right:4.4px">32,506</div>
<div class="c tl" style="left:200.30px;top:283.85px;width:124.70px;height:9.34px;line-height:10.54px;overflow:visible;padding-right:2.5px;padding-left:1px;transform:scaleX(0.93)"><span class="n">1067</span>kWh (前年同月<span class="n">1128</span>kWh)</div>
<div class="c tr  n" style="left:325.00px;top:283.85px;width:34.60px;height:9.34px;line-height:12.94px;padding-right:2.6px">1067</div>
<div class="c tr  n" style="left:359.60px;top:283.85px;width:48.70px;height:9.34px;line-height:12.94px;">79%</div>
<div class="c tr  n" style="left:408.30px;top:283.85px;width:48.90px;height:9.34px;line-height:12.94px;">95%</div>
<div class="c tl  n" style="left:491.60px;top:283.85px;width:61.80px;height:9.34px;line-height:12.94px;letter-spacing:-0.25px;padding-left:0.9px">06/22-07/24</div>
<div class="c tr" style="left:14.50px;top:293.19px;width:44.20px;height:9.34px;line-height:10.54px;padding-right:2.2px"><span class="n">2023</span>年<span class="n">08</span>月</div>
<div class="c tl" style="left:58.70px;top:293.19px;width:61.60px;height:9.34px;line-height:10.54px;"><span class="n">2023</span>年<span class="n">09</span>月<span class="n">10</span>日</div>
<div class="c tl" style="left:120.30px;top:293.19px;width:45.00px;height:9.34px;line-height:10.54px;padding-left:1.8px">電気使用料</div>
<div class="c tr  n" style="left:165.30px;top:293.19px;width:35.00px;height:9.34px;line-height:12.94px;padding-right:4.4px">39,706</div>
<div class="c tl" style="left:200.30px;top:293.19px;width:124.70px;height:9.34px;line-height:10.54px;overflow:visible;padding-right:2.5px;padding-left:1px;transform:scaleX(0.93)"><span class="n">1364</span>kWh (前年同月<span class="n">1257</span>kWh)</div>
<div class="c tr  n" style="left:325.00px;top:293.19px;width:34.60px;height:9.34px;line-height:12.94px;padding-right:2.6px">1364</div>
<div class="c tr  n" style="left:359.60px;top:293.19px;width:48.70px;height:9.34px;line-height:12.94px;">85%</div>
<div class="c tr  n" style="left:408.30px;top:293.19px;width:48.90px;height:9.34px;line-height:12.94px;">109%</div>
<div class="c tl  n" style="left:491.60px;top:293.19px;width:61.80px;height:9.34px;line-height:12.94px;letter-spacing:-0.25px;padding-left:0.9px">07/25-08/23</div>
<div class="c tr" style="left:14.50px;top:302.53px;width:44.20px;height:9.35px;line-height:10.55px;padding-right:2.2px"><span class="n">2023</span>年<span class="n">09</span>月</div>
<div class="c tr" style="left:14.50px;top:311.88px;width:44.20px;height:9.35px;line-height:10.55px;padding-right:2.2px"><span class="n">2023</span>年<span class="n">10</span>月</div>
<div class="c tr" style="left:14.50px;top:321.23px;width:44.20px;height:9.35px;line-height:10.55px;padding-right:2.2px"><span class="n">2023</span>年<span class="n">11</span>月</div>
<div class="c tr" style="left:14.50px;top:330.57px;width:44.20px;height:9.34px;line-height:10.54px;padding-right:2.2px"><span class="n">2023</span>年<span class="n">12</span>月</div>
<div class="c tl" style="left:325.00px;top:349.26px;width:34.60px;height:9.35px;line-height:10.55px;">平均</div>
<div class="c tr  n" style="left:359.60px;top:349.26px;width:48.70px;height:9.35px;line-height:12.95px;">118%</div>
<div class="c tr  n" style="left:408.30px;top:349.26px;width:48.90px;height:9.35px;line-height:12.95px;">91%</div>
<div class="c tl" style="left:491.60px;top:349.26px;width:61.80px;height:9.35px;line-height:10.55px;overflow:visible">値上比率の平均</div>
<div class="c tr  n" style="left:553.40px;top:349.26px;width:33.80px;height:9.35px;line-height:12.95px;">129%</div>
<div class="c h44 tc" style="left:14.50px;top:377.29px;width:44.20px;height:19.31px;padding-top:2.4px;"><span>対象月</span></div>
<div class="c h44 tc" style="left:58.70px;top:377.29px;width:61.60px;height:19.31px;padding-top:2.4px;"><span>決済日</span></div>
<div class="c h44 tc" style="left:165.30px;top:377.29px;width:35.00px;height:19.31px;padding-top:2.4px;"><span>金額</span></div>
<div class="c h44 tc" style="left:200.30px;top:377.29px;width:124.70px;height:19.31px;padding-top:2.4px;"><span>備考</span></div>
<div class="c h44 tc" style="left:325.00px;top:377.29px;width:34.60px;height:19.31px;"><span>消費量<br>(kWh)</span></div>
<div class="c h44 tc" style="left:359.60px;top:377.29px;width:48.70px;height:19.31px;"><span>対前年<br>金額比(%)</span></div>
<div class="c h44 tc" style="left:408.30px;top:377.29px;width:48.90px;height:19.31px;"><span>対前年<br>消費量比(%)</span></div>
<div class="c h44 tl" style="left:491.60px;top:377.29px;width:61.80px;height:19.31px;padding-top:2.4px;"><span>期間</span></div>
<div style="left:407.80px;top:292.69px;width:49.90px;height:10.34px;border:1px solid #217346;box-sizing:border-box"></div>
<div style="left:455.90px;top:301.23px;width:2.80px;height:2.80px;background:#fff"></div>
<div style="left:456.30px;top:301.63px;width:2.40px;height:2.40px;background:#217346"></div>
<div style="left:1.00px;top:79.30px;width:628.10px;height:8.30px;background:#e6e6e6"></div>
<div style="left:1.00px;top:87.60px;width:13.50px;height:315.60px;background:#e6e6e6"></div>
<div class="hd" style="left:14.50px;top:79.30px;width:44.20px;height:8.30px;line-height:9.70px;">A</div>
<div style="left:58.20px;top:80.30px;width:1.00px;height:7.30px;background:#cdcdcd"></div>
<div class="hd" style="left:58.70px;top:79.30px;width:61.60px;height:8.30px;line-height:9.70px;">B</div>
<div style="left:119.80px;top:80.30px;width:1.00px;height:7.30px;background:#cdcdcd"></div>
<div class="hd" style="left:120.30px;top:79.30px;width:45.00px;height:8.30px;line-height:9.70px;">C</div>
<div style="left:164.80px;top:80.30px;width:1.00px;height:7.30px;background:#cdcdcd"></div>
<div class="hd" style="left:165.30px;top:79.30px;width:35.00px;height:8.30px;line-height:9.70px;">D</div>
<div style="left:199.80px;top:80.30px;width:1.00px;height:7.30px;background:#cdcdcd"></div>
<div class="hd" style="left:200.30px;top:79.30px;width:124.70px;height:8.30px;line-height:9.70px;">E</div>
<div style="left:324.50px;top:80.30px;width:1.00px;height:7.30px;background:#cdcdcd"></div>
<div class="hd" style="left:325.00px;top:79.30px;width:34.60px;height:8.30px;line-height:9.70px;">F</div>
<div style="left:359.10px;top:80.30px;width:1.00px;height:7.30px;background:#cdcdcd"></div>
<div class="hd" style="left:359.60px;top:79.30px;width:48.70px;height:8.30px;line-height:9.70px;">M</div>
<div style="left:407.80px;top:80.30px;width:1.00px;height:7.30px;background:#cdcdcd"></div>
<div style="left:408.30px;top:79.30px;width:48.90px;height:8.30px;background:#d2d2d2;border-bottom:1px solid #217346;box-sizing:border-box"></div>
<div class="hd" style="left:408.30px;top:79.30px;width:48.90px;height:8.30px;line-height:9.70px;color:#217346">N</div>
<div style="left:456.70px;top:80.30px;width:1.00px;height:7.30px;background:#cdcdcd"></div>
<div class="hd" style="left:457.20px;top:79.30px;width:34.40px;height:8.30px;line-height:9.70px;">O</div>
<div style="left:491.10px;top:80.30px;width:1.00px;height:7.30px;background:#cdcdcd"></div>
<div class="hd" style="left:491.60px;top:79.30px;width:61.80px;height:8.30px;line-height:9.70px;">P</div>
<div style="left:552.90px;top:80.30px;width:1.00px;height:7.30px;background:#cdcdcd"></div>
<div class="hd" style="left:553.40px;top:79.30px;width:33.80px;height:8.30px;line-height:9.70px;">Q</div>
<div style="left:586.70px;top:80.30px;width:1.00px;height:7.30px;background:#cdcdcd"></div>
<div class="hd" style="left:587.20px;top:79.30px;width:35.10px;height:8.30px;line-height:9.70px;">R</div>
<div style="left:621.80px;top:80.30px;width:1.00px;height:7.30px;background:#cdcdcd"></div>
<div style="left:14.00px;top:80.30px;width:1.00px;height:7.30px;background:#cdcdcd"></div>
<div style="left:360.50px;top:80.30px;width:0.70px;height:7.30px;background:#cdcdcd"></div>
<div style="left:1.00px;top:87.10px;width:627.60px;height:0.90px;background:#cdcdcd"></div>
<svg style="left:5.00px;top:80.60px" width="8" height="7" viewBox="0 0 8 7"><path d="M7.5 0.5L7.5 6.5L1 6.5Z" fill="#b4b4b4"/></svg>
<div class="rn" style="left:1px;top:87.60px;width:13.5px;height:9.34px;line-height:10.74px;">13</div>
<div style="left:1.00px;top:96.44px;width:13.50px;height:1.00px;background:#cdcdcd"></div>
<div class="rn" style="left:1px;top:96.94px;width:13.5px;height:9.34px;line-height:10.74px;">14</div>
<div style="left:1.00px;top:105.79px;width:13.50px;height:1.00px;background:#cdcdcd"></div>
<div class="rn" style="left:1px;top:106.29px;width:13.5px;height:9.34px;line-height:10.74px;">15</div>
<div style="left:1.00px;top:115.13px;width:13.50px;height:1.00px;background:#cdcdcd"></div>
<div class="rn" style="left:1px;top:115.63px;width:13.5px;height:9.34px;line-height:10.74px;">16</div>
<div style="left:1.00px;top:124.48px;width:13.50px;height:1.00px;background:#cdcdcd"></div>
<div class="rn" style="left:1px;top:124.98px;width:13.5px;height:9.34px;line-height:10.74px;">17</div>
<div style="left:1.00px;top:133.82px;width:13.50px;height:1.00px;background:#cdcdcd"></div>
<div class="rn" style="left:1px;top:134.32px;width:13.5px;height:9.35px;line-height:10.75px;">18</div>
<div style="left:1.00px;top:143.17px;width:13.50px;height:1.00px;background:#cdcdcd"></div>
<div class="rn" style="left:1px;top:143.67px;width:13.5px;height:9.34px;line-height:10.74px;">19</div>
<div style="left:1.00px;top:152.51px;width:13.50px;height:1.00px;background:#cdcdcd"></div>
<div class="rn" style="left:1px;top:153.01px;width:13.5px;height:9.35px;line-height:10.75px;">20</div>
<div style="left:1.00px;top:161.86px;width:13.50px;height:1.00px;background:#cdcdcd"></div>
<div class="rn" style="left:1px;top:162.36px;width:13.5px;height:9.34px;line-height:10.74px;">21</div>
<div style="left:1.00px;top:171.20px;width:13.50px;height:1.00px;background:#cdcdcd"></div>
<div class="rn" style="left:1px;top:171.70px;width:13.5px;height:9.35px;line-height:10.75px;">22</div>
<div style="left:1.00px;top:180.55px;width:13.50px;height:1.00px;background:#cdcdcd"></div>
<div class="rn" style="left:1px;top:181.05px;width:13.5px;height:9.34px;line-height:10.74px;">23</div>
<div style="left:1.00px;top:189.89px;width:13.50px;height:1.00px;background:#cdcdcd"></div>
<div class="rn" style="left:1px;top:190.39px;width:13.5px;height:9.35px;line-height:10.75px;">24</div>
<div style="left:1.00px;top:199.24px;width:13.50px;height:1.00px;background:#cdcdcd"></div>
<div class="rn" style="left:1px;top:199.74px;width:13.5px;height:9.34px;line-height:10.74px;">25</div>
<div style="left:1.00px;top:208.59px;width:13.50px;height:1.00px;background:#cdcdcd"></div>
<div class="rn" style="left:1px;top:209.09px;width:13.5px;height:9.34px;line-height:10.74px;">26</div>
<div style="left:1.00px;top:217.93px;width:13.50px;height:1.00px;background:#cdcdcd"></div>
<div class="rn" style="left:1px;top:218.43px;width:13.5px;height:9.34px;line-height:10.74px;">27</div>
<div style="left:1.00px;top:227.28px;width:13.50px;height:1.00px;background:#cdcdcd"></div>
<div class="rn" style="left:1px;top:227.78px;width:13.5px;height:9.34px;line-height:10.74px;">28</div>
<div style="left:1.00px;top:236.62px;width:13.50px;height:1.00px;background:#cdcdcd"></div>
<div class="rn" style="left:1px;top:237.12px;width:13.5px;height:9.34px;line-height:10.74px;">29</div>
<div style="left:1.00px;top:245.97px;width:13.50px;height:1.00px;background:#cdcdcd"></div>
<div class="rn" style="left:1px;top:246.47px;width:13.5px;height:9.34px;line-height:10.74px;">30</div>
<div style="left:1.00px;top:255.31px;width:13.50px;height:1.00px;background:#cdcdcd"></div>
<div class="rn" style="left:1px;top:255.81px;width:13.5px;height:9.34px;line-height:10.74px;">31</div>
<div style="left:1.00px;top:264.65px;width:13.50px;height:1.00px;background:#cdcdcd"></div>
<div class="rn" style="left:1px;top:265.15px;width:13.5px;height:9.35px;line-height:10.75px;">32</div>
<div style="left:1.00px;top:274.00px;width:13.50px;height:1.00px;background:#cdcdcd"></div>
<div class="rn" style="left:1px;top:274.50px;width:13.5px;height:9.35px;line-height:10.75px;">33</div>
<div style="left:1.00px;top:283.35px;width:13.50px;height:1.00px;background:#cdcdcd"></div>
<div class="rn" style="left:1px;top:283.85px;width:13.5px;height:9.34px;line-height:10.74px;">34</div>
<div style="left:1.00px;top:292.69px;width:13.50px;height:1.00px;background:#cdcdcd"></div>
<div style="left:1.00px;top:293.19px;width:13.50px;height:9.34px;background:#d2d2d2;border-right:1px solid #217346;box-sizing:border-box"></div>
<div class="rn" style="left:1px;top:293.19px;width:13.5px;height:9.34px;line-height:10.74px;color:#217346">35</div>
<div style="left:1.00px;top:302.03px;width:13.50px;height:1.00px;background:#cdcdcd"></div>
<div class="rn" style="left:1px;top:302.53px;width:13.5px;height:9.35px;line-height:10.75px;">36</div>
<div style="left:1.00px;top:311.38px;width:13.50px;height:1.00px;background:#cdcdcd"></div>
<div class="rn" style="left:1px;top:311.88px;width:13.5px;height:9.35px;line-height:10.75px;">37</div>
<div style="left:1.00px;top:320.73px;width:13.50px;height:1.00px;background:#cdcdcd"></div>
<div class="rn" style="left:1px;top:321.23px;width:13.5px;height:9.35px;line-height:10.75px;">38</div>
<div style="left:1.00px;top:330.07px;width:13.50px;height:1.00px;background:#cdcdcd"></div>
<div class="rn" style="left:1px;top:330.57px;width:13.5px;height:9.34px;line-height:10.74px;">39</div>
<div style="left:1.00px;top:339.42px;width:13.50px;height:1.00px;background:#cdcdcd"></div>
<div class="rn" style="left:1px;top:339.92px;width:13.5px;height:9.34px;line-height:10.74px;">40</div>
<div style="left:1.00px;top:348.76px;width:13.50px;height:1.00px;background:#cdcdcd"></div>
<div class="rn" style="left:1px;top:349.26px;width:13.5px;height:9.35px;line-height:10.75px;">41</div>
<div style="left:1.00px;top:358.11px;width:13.50px;height:1.00px;background:#cdcdcd"></div>
<div class="rn" style="left:1px;top:358.61px;width:13.5px;height:9.35px;line-height:10.75px;">42</div>
<div style="left:1.00px;top:367.45px;width:13.50px;height:1.00px;background:#cdcdcd"></div>
<div class="rn" style="left:1px;top:367.95px;width:13.5px;height:9.34px;line-height:10.74px;">43</div>
<div style="left:1.00px;top:376.79px;width:13.50px;height:1.00px;background:#cdcdcd"></div>
<div class="rn" style="left:1px;top:387.00px;width:13.5px;height:9.6px;line-height:11px;">44</div>
<div style="left:1.00px;top:396.10px;width:13.50px;height:1.00px;background:#cdcdcd"></div>
<div class="rn" style="left:1px;top:396.60px;width:13.5px;height:6.60px;line-height:11px;overflow:hidden;">45</div>
<div style="left:14.00px;top:87.60px;width:1.00px;height:315.60px;background:#cdcdcd"></div>
<div style="left:628.60px;top:79.30px;width:10.40px;height:323.90px;background:#e6e6e6"></div>
<div style="left:628.30px;top:87.60px;width:1.00px;height:315.60px;background:#c6c6c6"></div>
<div style="left:630.30px;top:79.30px;width:7.50px;height:8.00px;border:0.7px solid #b8b8b8;box-sizing:border-box;background:#fff"></div>
<svg style="left:632.00px;top:82.00px" width="4" height="3" viewBox="0 0 4 3"><path d="M0 2.8L2 0.3L4 2.8Z" fill="#333"/></svg>
<div style="left:630.30px;top:171.40px;width:7.50px;height:223.30px;border:0.7px solid #b8b8b8;box-sizing:border-box;background:#fff"></div>
<div style="left:630.30px;top:395.40px;width:7.50px;height:7.80px;border:0.7px solid #b8b8b8;box-sizing:border-box;background:#fff"></div>
<svg style="left:632.00px;top:398.00px" width="4" height="3" viewBox="0 0 4 3"><path d="M0 0.2L2 2.7L4 0.2Z" fill="#333"/></svg>
<div style="left:1.00px;top:403.20px;width:638.00px;height:12.70px;background:#e6e6e6"></div>
<div style="left:1.00px;top:402.90px;width:638.00px;height:0.70px;background:#c9c9c9"></div>
<svg style="left:11.50px;top:406.50px" width="4" height="6" viewBox="0 0 4 6"><path d="M3.4 0.5L0.6 3L3.4 5.5Z" fill="#c0c0c0"/></svg>
<svg style="left:22.50px;top:406.50px" width="4" height="6" viewBox="0 0 4 6"><path d="M0.6 0.5L3.4 3L0.6 5.5Z" fill="#c0c0c0"/></svg>
<div style="left:42.70px;top:403.20px;width:32.30px;height:11.00px;background:#fff;border-bottom:1.4px solid #217346"></div>
<div class="ui" style="left:48.70px;top:403.60px;transform:scaleX(0.846);color:#217346;font-size:8px;font-weight:bold">電気代</div>
<div class="ui g7" style="left:80.00px;top:403.60px;transform:scaleX(0.849);font-size:8px">ガス代(前)</div>
<div class="ui g7" style="left:122.70px;top:403.60px;transform:scaleX(0.775);font-size:8px">ガス代</div>
<div class="ui g7" style="left:152.30px;top:403.60px;transform:scaleX(0.875);font-size:8px">水道代</div>
<div style="left:116.90px;top:405.50px;width:0.80px;height:7.00px;background:#b0b0b0"></div>
<div style="left:146.30px;top:405.50px;width:0.80px;height:7.00px;background:#b0b0b0"></div>
<div style="left:178.60px;top:405.50px;width:0.80px;height:7.00px;background:#b0b0b0"></div>
<svg style="left:191.70px;top:404.30px" width="10" height="10" viewBox="0 0 10 10"><circle cx="5" cy="5" r="4" fill="none" stroke="#8a8a8a" stroke-width="0.7"/><path d="M5 2.8V7.2M2.8 5H7.2" stroke="#7a7a7a" stroke-width="0.7"/></svg>
<div style="left:382.60px;top:406.30px;width:1.00px;height:1.00px;background:#b0b0b0"></div>
<div style="left:382.60px;top:408.60px;width:1.00px;height:1.00px;background:#b0b0b0"></div>
<div style="left:382.60px;top:410.90px;width:1.00px;height:1.00px;background:#b0b0b0"></div>
<div style="left:390.00px;top:405.40px;width:7.60px;height:8.00px;border:0.7px solid #b8b8b8;box-sizing:border-box;background:#fff"></div>
<svg style="left:392.30px;top:407.30px" width="3" height="4" viewBox="0 0 3 4"><path d="M2.8 0L0.3 2L2.8 4Z" fill="#333"/></svg>
<div style="left:398.00px;top:405.40px;width:210.00px;height:8.00px;border:0.7px solid #b8b8b8;box-sizing:border-box;background:#fff"></div>
<div style="left:620.50px;top:405.40px;width:8.70px;height:8.00px;border:0.7px solid #b8b8b8;box-sizing:border-box;background:#fff"></div>
<svg style="left:623.60px;top:407.40px" width="3" height="4" viewBox="0 0 3 4"><path d="M0.2 0L2.7 2L0.2 4Z" fill="#333"/></svg>
<div style="left:1.00px;top:415.90px;width:638.00px;height:11.10px;background:#f1f1f1"></div>
<div class="ui g7" style="left:4.10px;top:416.54px;transform:scaleX(0.818);font-size:7.8px;color:#333">準備完了</div>
<svg style="left:39.50px;top:416.80px" width="8" height="8" viewBox="0 0 8 8"><circle cx="3.2" cy="3.4" r="2.6" fill="none" stroke="#555" stroke-width="0.7"/><path d="M3.2 1.8V3.6M4.2 4.4L7.2 5.6L5.8 6L6.6 7.4" fill="none" stroke="#444" stroke-width="0.7"/></svg>
<div class="ui g7" style="left:49.30px;top:416.54px;transform:scaleX(0.676);font-size:7.8px;color:#333">アクセシビリティ: 検討が必要です</div>
<div style="left:471.70px;top:416.00px;width:20.00px;height:9.70px;background:#cfcfcf"></div>
<svg style="left:477.50px;top:417.70px" width="9" height="8" viewBox="0 0 9 8"><rect x="0.8" y="0.8" width="7.4" height="6.4" fill="none" stroke="#666" stroke-width="0.7"/><path d="M0.8 3H8.2M0.8 5.1H8.2M3.3 0.8V7.2M5.8 0.8V7.2" stroke="#666" stroke-width="0.6"/></svg>
<svg style="left:498.50px;top:417.70px" width="9" height="8" viewBox="0 0 9 8"><rect x="0.8" y="0.8" width="7.4" height="6.4" fill="none" stroke="#777" stroke-width="0.7"/><rect x="2.6" y="2.4" width="3.8" height="3.4" fill="none" stroke="#777" stroke-width="0.6"/></svg>
<svg style="left:519.50px;top:417.70px" width="9" height="8" viewBox="0 0 9 8"><rect x="0.8" y="0.8" width="7.4" height="6.4" fill="none" stroke="#777" stroke-width="0.7"/><path d="M0.8 4H4.5V0.8" fill="none" stroke="#777" stroke-width="0.6"/></svg>
<div style="left:538.30px;top:421.00px;width:3.70px;height:0.70px;background:#666"></div>
<div style="left:544.30px;top:421.00px;width:53.40px;height:0.70px;background:#8a8a8a"></div>
<div style="left:569.60px;top:417.80px;width:2.60px;height:7.20px;background:#3a3a3a"></div>
<div style="left:600.20px;top:421.00px;width:4.20px;height:0.70px;background:#777"></div>
<div style="left:601.95px;top:419.20px;width:0.70px;height:4.30px;background:#777"></div>
<div class="ui g7" style="left:611.80px;top:416.54px;transform:scaleX(0.852);font-size:7.8px;color:#333">100%</div>
<div style="left:0.00px;top:34.00px;width:1.00px;height:393.00px;background:#6fa587"></div>
<div style="left:638.60px;top:34.00px;width:1.40px;height:393.00px;background:#7fae93"></div>
<div style="left:0.00px;top:425.70px;width:640.00px;height:1.30px;background:#72ab8d"></div>
</div>
</body>
</html>
